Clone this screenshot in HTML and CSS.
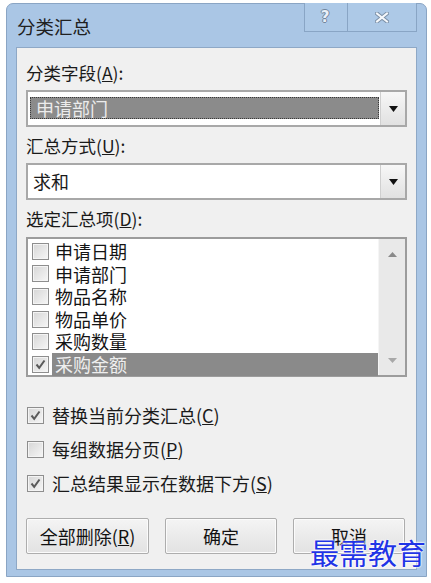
FILE: index.html
```html
<!DOCTYPE html>
<html lang="zh-CN">
<head>
<meta charset="utf-8">
<title>分类汇总</title>
<link rel="stylesheet" href="styles.css">
</head>
<body>
<div class="dialog">
  <div class="titlebar">
    <span class="title">分类汇总</span>
    <div class="caption">
      <div class="cap-btn help"><span>?</span></div>
      <div class="cap-btn close">
        <svg width="14" height="11" viewBox="0 0 14 11"><path d="M2 1.5 L12 9.5 M12 1.5 L2 9.5" stroke="#7b8fa6" stroke-width="4" stroke-linecap="square"/><path d="M2 1.5 L12 9.5 M12 1.5 L2 9.5" stroke="#f4f7fb" stroke-width="2" stroke-linecap="square"/></svg>
      </div>
    </div>
  </div>
  <div class="client">
    <div class="label">分类字段(<u>A</u>):</div>
    <div class="combo">
      <div class="combo-value"><span class="combo-sel">申请部门</span></div>
      <div class="combo-btn"><svg width="9" height="6" viewBox="0 0 9 6"><path d="M0 0 H9 L4.5 6 Z" fill="#111"/></svg></div>
    </div>
    <div class="label">汇总方式(<u>U</u>):</div>
    <div class="combo">
      <div class="combo-value"><span class="combo-text">求和</span></div>
      <div class="combo-btn"><svg width="9" height="6" viewBox="0 0 9 6"><path d="M0 0 H9 L4.5 6 Z" fill="#111"/></svg></div>
    </div>
    <div class="label">选定汇总项(<u>D</u>):</div>
    <div class="listbox">
      <div class="items">
        <div class="item"><span class="cb"></span><span class="item-text">申请日期</span></div>
        <div class="item"><span class="cb"></span><span class="item-text">申请部门</span></div>
        <div class="item"><span class="cb"></span><span class="item-text">物品名称</span></div>
        <div class="item"><span class="cb"></span><span class="item-text">物品单价</span></div>
        <div class="item"><span class="cb"></span><span class="item-text">采购数量</span></div>
        <div class="item selected"><span class="cb checked"><svg width="11" height="11" viewBox="0 0 11 11"><path d="M1.5 5.5 L4.2 8.8 L9.5 1.5" stroke="#5a5a5a" stroke-width="2" fill="none"/></svg></span><span class="item-text">采购金额</span></div>
      </div>
      <div class="scrollbar">
        <svg width="9" height="5" viewBox="0 0 9 5"><path d="M0 5 H9 L4.5 0 Z" fill="#8a8a8a"/></svg>
        <svg width="9" height="5" viewBox="0 0 9 5"><path d="M0 0 H9 L4.5 5 Z" fill="#a8a8a8"/></svg>
      </div>
    </div>
    <div class="options">
      <div class="opt"><span class="cb checked"><svg width="11" height="11" viewBox="0 0 11 11"><path d="M1.5 5.5 L4.2 8.8 L9.5 1.5" stroke="#5a5a5a" stroke-width="2" fill="none"/></svg></span><span>替换当前分类汇总(<u>C</u>)</span></div>
      <div class="opt"><span class="cb"></span><span>每组数据分页(<u>P</u>)</span></div>
      <div class="opt"><span class="cb checked"><svg width="11" height="11" viewBox="0 0 11 11"><path d="M1.5 5.5 L4.2 8.8 L9.5 1.5" stroke="#5a5a5a" stroke-width="2" fill="none"/></svg></span><span>汇总结果显示在数据下方(<u>S</u>)</span></div>
    </div>
    <div class="buttons">
      <div class="btn wide">全部删除(<u>R</u>)</div>
      <div class="btn">确定</div>
      <div class="btn">取消</div>
    </div>
  </div>
  <div class="watermark">最需教育</div>
</div>
</body>
</html>
```
FILE: styles.css
```css
* { box-sizing: border-box; }
html, body { margin: 0; padding: 0; background: #ffffff; }
body {
  font-family: "Noto Sans CJK SC", "Noto Sans", sans-serif;
  font-size: 18px;
  color: #1a1a1a;
}
.dialog {
  position: relative;
  margin: 3px 0 0 6px;
  width: 421px;
  height: 574px;
  background: #aac6e5;
  border: 1px solid #8aa5c4;
  border-radius: 7px 7px 0 0;
  display: flex;
  flex-direction: column;
}
.titlebar {
  height: 43px;
  display: flex;
  justify-content: space-between;
  align-items: flex-start;
  padding-left: 10px;
  padding-right: 9px;
}
.title {
  font-size: 18.5px;
  line-height: 22px;
  margin-top: 11px;
  color: #202020;
}
.caption { display: flex; margin-top: -1px; }
.cap-btn {
  height: 29px;
  border: 1px solid #89a5c5;
  border-top: none;
  display: flex;
  align-items: center;
  justify-content: center;
  background: #adc9e7;
}
.help { width: 43px; border-right: none; }
.help span {
  font-family: "DejaVu Sans", sans-serif;
  font-size: 15px;
  line-height: 15px;
  font-weight: bold;
  color: #e9eff7;
  text-shadow: 1px 0 0 #72869d, -1px 0 0 #72869d, 0 1px 0 #72869d, 0 -1px 0 #72869d;
  margin-left: -2px;
}
.close { width: 70px; }
.client {
  margin: 0 9px;
  height: 523px;
  background: #f0f0f0;
  border: 1px solid #8ea8c6;
  padding: 6px 9px 0 9px;
}
.label {
  height: 36px;
  padding-top: 8px;
  line-height: 22px;
  font-size: 17.5px;
  color: #1a1a1a;
}
.combo {
  height: 37px;
  border: 2px solid #a8a8a8;
  background: #ffffff;
  display: flex;
}
.combo-value {
  flex: 1;
  padding: 5px 1px 6px 2px;
  display: flex;
}
.combo-sel {
  flex: 1;
  background: #8b8b8b;
  border: 1px dotted #3a3a3a;
  color: #ececec;
  line-height: 20px;
  padding-left: 5px;
}
.combo-text {
  padding-left: 3px;
  line-height: 22px;
  color: #1a1a1a;
}
.combo-btn {
  width: 25px;
  background: linear-gradient(#f7f7f7, #e1e1e1);
  border-left: 1px solid #cfcfcf;
  display: flex;
  align-items: center;
  justify-content: center;
}
.listbox {
  margin-top: 1px;
  height: 140px;
  border: 2px solid #9c9c9c;
  background: #ffffff;
  display: flex;
}
.items { flex: 1; padding-top: 1px; }
.item {
  height: 22.6px;
  display: flex;
  align-items: center;
  padding-left: 4px;
}
.item .cb { margin-right: 3px; }
.item-text {
  flex: 1;
  height: 100%;
  padding-left: 3px;
  line-height: 22.6px;
  font-size: 18px;
  color: #141414;
}
.item.selected .item-text { background: #8a8a8a; color: #eeeeee; }
.scrollbar {
  width: 27px;
  background: #e9e9e9;
  border-left: 1px solid #f5f5f5;
  display: flex;
  flex-direction: column;
  align-items: center;
  justify-content: space-between;
  padding: 13px 0 12px;
}
.cb {
  width: 17px;
  height: 17px;
  flex: none;
  border: 1px solid #8e8e8e;
  background: linear-gradient(135deg, #d6d6d6, #f6f6f6);
  box-shadow: inset 0 0 0 1px #f4f4f4;
  display: flex;
  align-items: center;
  justify-content: center;
}
.options { margin-top: 21px; }
.opt {
  height: 34px;
  display: flex;
  align-items: center;
  padding-left: 1px;
  font-size: 18px;
}
.opt .cb { margin-right: 8px; }
.buttons {
  margin-top: 18px;
  display: flex;
  gap: 16px;
}
.btn {
  width: 112px;
  height: 36px;
  border: 1px solid #adadad;
  border-radius: 2px;
  background: linear-gradient(#f4f4f4, #e2e2e2);
  box-shadow: inset 0 0 0 1px #fbfbfb;
  display: flex;
  align-items: center;
  justify-content: center;
  font-size: 18px;
  color: #111;
}
.btn.wide { width: 123px; }
.watermark {
  position: absolute;
  left: 303px;
  top: 532px;
  font-size: 29px;
  line-height: 32px;
  color: #1f34e6;
  text-shadow: 0 0 2px #ffffff, 0 0 2px #ffffff, 0 0 2px #ffffff;
}
```
